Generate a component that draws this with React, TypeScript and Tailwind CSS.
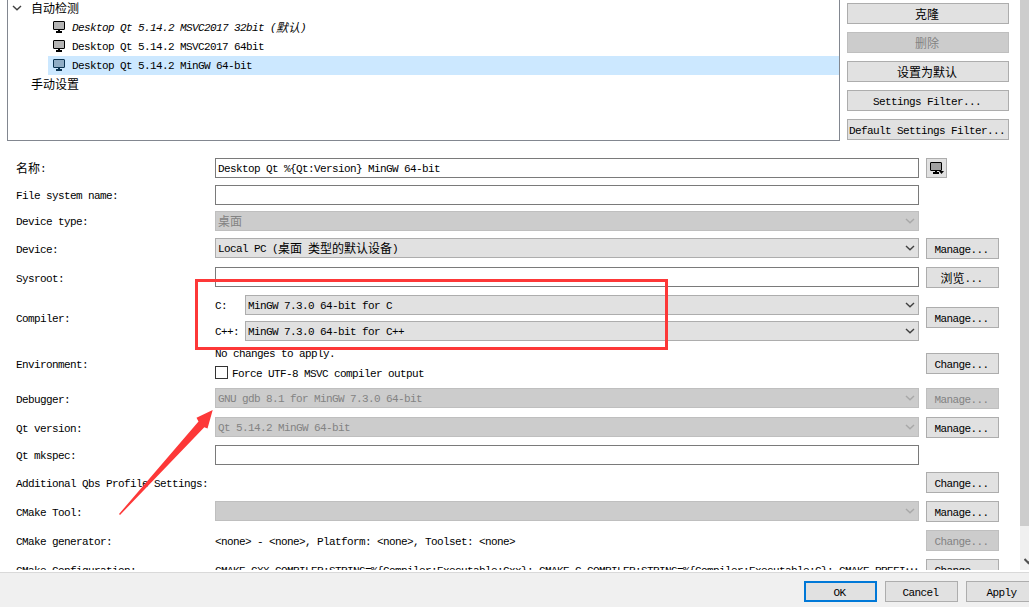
import type { ReactNode } from "react";

const latin = "font-['Liberation_Mono','Noto_Sans_CJK_SC',monospace] text-[11px] tracking-[-0.6px]";
const han = "font-['Noto_Sans_CJK_SC',sans-serif] text-[12px] leading-[0px] tracking-normal";

function T({ children, className = "" }: { children: string; className?: string }) {
  const parts = children.split(/([\u4e00-\u9fff]+|…)/).filter(Boolean);
  return (
    <span className={`block h-[14px] shrink-0 whitespace-pre leading-[16px] ${latin} ${className}`}>
      {parts.map((p, i) =>
        p === "…" ? (
          <span key={i} className={`relative -top-[4px] ${han}`}>{p}</span>
        ) : /[\u4e00-\u9fff]/.test(p) ? (
          <span key={i} className={`relative top-px ${han}`}>{p}</span>
        ) : (
          p
        )
      )}
    </span>
  );
}

function Monitor({ fill = "#b4b4b4", stroke = "#000" }: { fill?: string; stroke?: string }) {
  return (
    <svg width="12" height="12" viewBox="0 0 12 12" className="shrink-0">
      <rect x="0.5" y="0.5" width="11" height="8" rx="0.5" fill={fill} stroke={stroke} />
      <rect x="5" y="9" width="2" height="2" fill={stroke} />
      <rect x="3" y="10" width="6" height="2" fill={stroke} />
    </svg>
  );
}

function Chevron({ color = "#404040" }: { color?: string }) {
  return (
    <svg width="10" height="6" viewBox="0 0 10 6" className="shrink-0">
      <path d="M1 1 L5 4.8 L9 1" fill="none" stroke={color} strokeWidth="1.4" />
    </svg>
  );
}

function Button({ children, disabled, primary, className = "w-[73px]" }: { children: string; disabled?: boolean; primary?: boolean; className?: string }) {
  const look = disabled
    ? "border border-[#bfbfbf] bg-[#cccccc] text-[#838383]"
    : primary
      ? "border-2 border-[#0078d7] bg-[#e1e1e1]"
      : "border border-[#adadad] bg-[#e1e1e1]";
  return (
    <button disabled={disabled} className={`flex h-[21px] shrink-0 items-center justify-center overflow-hidden pr-[2px] ${look} ${className}`}>
      <T>{children}</T>
    </button>
  );
}

function Combo({ children = "", disabled }: { children?: string; disabled?: boolean }) {
  return (
    <div className={`flex h-5 min-w-0 grow items-center justify-between border pr-[3px] pl-[2px] ${disabled ? "border-[#bfbfbf] bg-[#cccccc] text-[#838383]" : "border-[#adadad] bg-[#e1e1e1]"}`}>
      <T>{children}</T>
      <Chevron color={disabled ? "#a8a8a8" : "#404040"} />
    </div>
  );
}

function Input({ children = "" }: { children?: string }) {
  return (
    <div className="flex h-5 grow items-center border border-[#7a7a7a] bg-white pl-[2px]">
      <T>{children}</T>
    </div>
  );
}

function Row({ label, className, action, children }: { label: string; className: string; action?: ReactNode; children?: ReactNode }) {
  return (
    <div className={`flex shrink-0 ${className}`}>
      <div className="flex w-[199px] shrink-0 items-center"><T>{label}</T></div>
      <div className="flex w-[704px] shrink-0 items-start">{children}</div>
      <div className="ml-[7px] flex items-center">{action}</div>
    </div>
  );
}

function KitItem({ children, selected, italic }: { children: string; selected?: boolean; italic?: boolean }) {
  return (
    <div className={`ml-10 flex h-[19px] items-center gap-[7px] pb-px pl-[5px] ${selected ? "bg-[#cce8ff]" : ""}`}>
      <Monitor fill={selected ? "#90adc5" : "#b4b4b4"} stroke={selected ? "#0b3350" : "#000"} />
      <T className={italic ? "italic" : ""}>{children}</T>
    </div>
  );
}

export default function App() {
  return (
    <div className="relative flex h-[607px] w-[1029px] flex-col overflow-hidden bg-white text-black">
      <div className="flex h-[570px] shrink-0 overflow-hidden">
        <div className="flex w-[1020px] shrink-0 flex-col">
          <div className="flex h-[141px] shrink-0">
            <div className="ml-[7px] w-[833px] border-x border-b border-[#828790]">
              <div className="flex h-[18px] items-center gap-[9px] pb-[2px] pl-[4px]">
                <Chevron />
                <T>自动检测</T>
              </div>
              <KitItem italic>Desktop Qt 5.14.2 MSVC2017 32bit (默认)</KitItem>
              <KitItem>Desktop Qt 5.14.2 MSVC2017 64bit</KitItem>
              <KitItem selected>Desktop Qt 5.14.2 MinGW 64-bit</KitItem>
              <div className="flex h-[19px] items-center pb-px pl-[23px]"><T>手动设置</T></div>
            </div>
            <div className="ml-[7px] flex flex-col gap-2 pt-[3px]">
              <Button className="w-[162px]">克隆</Button>
              <Button className="w-[162px]" disabled>删除</Button>
              <Button className="w-[162px]">设置为默认</Button>
              <Button className="w-[162px]">Settings Filter...</Button>
              <Button className="w-[162px]">Default Settings Filter...</Button>
            </div>
          </div>

          <div className="flex flex-col pt-[17px] pl-4">
            <Row
              label="名称:"
              className="mb-[7px] h-5"
              action={
                <button className="flex h-5 w-[21px] items-end border border-[#adadad] bg-[#e1e1e1] pb-[3px] pl-[3px]">
                  <Monitor fill="#a0a0a0" />
                  <svg width="5" height="3" viewBox="0 0 5 3" className="-ml-[3px] shrink-0"><path d="M0 0h5L2.5 3z" /></svg>
                </button>
              }
            >
              <Input>{"Desktop Qt %{Qt:Version} MinGW 64-bit"}</Input>
            </Row>
            <Row label="File system name:" className="mb-[6px] h-5"><Input /></Row>
            <Row label="Device type:" className="mb-[7px] h-5"><Combo disabled>桌面</Combo></Row>
            <Row label="Device:" className="mb-2 h-[21px]" action={<Button>Manage...</Button>}>
              <Combo>Local PC (桌面 类型的默认设备)</Combo>
            </Row>
            <Row label="Sysroot:" className="mb-[7px] h-[21px]" action={<Button>浏览...</Button>}><Input /></Row>
            <Row label="Compiler:" className="mb-[5px] h-[46px]" action={<div className="pb-px"><Button>Manage...</Button></div>}>
              <div className="flex grow flex-col gap-[6px]">
                <div className="flex items-center"><div className="w-[30px]"><T>C:</T></div><Combo>MinGW 7.3.0 64-bit for C</Combo></div>
                <div className="flex items-center"><div className="w-[30px]"><T>C++:</T></div><Combo>MinGW 7.3.0 64-bit for C++</Combo></div>
              </div>
            </Row>
            <Row label="Environment:" className="mb-[7px] h-[35px]" action={<Button>Change...</Button>}>
              <div className="flex flex-col">
                <T className="mb-[6px]">No changes to apply.</T>
                <div className="flex h-[13px] items-center gap-1">
                  <span className="size-[13px] border border-[#333] bg-white" />
                  <T>Force UTF-8 MSVC compiler output</T>
                </div>
              </div>
            </Row>
            <Row label="Debugger:" className="mb-2 h-[21px]" action={<Button disabled>Manage...</Button>}>
              <Combo disabled>GNU gdb 8.1 for MinGW 7.3.0 64-bit</Combo>
            </Row>
            <Row label="Qt version:" className="mb-[7px] h-[21px]" action={<Button>Manage...</Button>}>
              <Combo disabled>Qt 5.14.2 MinGW 64-bit</Combo>
            </Row>
            <Row label="Qt mkspec:" className="mb-[7px] h-5"><Input /></Row>
            <Row label="Additional Qbs Profile Settings:" className="mb-2 h-[21px]" action={<Button>Change...</Button>} />
            <Row label="CMake Tool:" className="mb-2 h-[21px]" action={<Button>Manage...</Button>}><Combo disabled /></Row>
            <Row label="CMake generator:" className="mb-2 h-[21px]" action={<Button disabled>Change...</Button>}>
              <T className="self-center">{"<none> - <none>, Platform: <none>, Toolset: <none>"}</T>
            </Row>
            <Row label="CMake Configuration:" className="h-[21px]" action={<Button>Change...</Button>}>
              <T className="self-center">{"CMAKE_CXX_COMPILER:STRING=%{Compiler:Executable:Cxx}; CMAKE_C_COMPILER:STRING=%{Compiler:Executable:C}; CMAKE_PREFI…"}</T>
            </Row>
          </div>
        </div>

        <div className="flex w-[17px] shrink-0 flex-col bg-[#f0f0f0]">
          <div className="h-[526px] bg-[#cdcdcd]" />
          <svg width="9" height="7" viewBox="0 0 9 7" className="mt-8 ml-1">
            <path d="M0.5 1 L4.5 5 L8.5 1" fill="none" stroke="#505050" strokeWidth="2" />
          </svg>
        </div>
      </div>

      <div className="mt-[2px] flex h-[35px] shrink-0 gap-2 border-t border-[#d9d9d9] bg-[#f0f0f0] pt-2 pl-[804px]">
        <Button primary>OK</Button>
        <Button>Cancel</Button>
        <Button>Apply</Button>
      </div>

      <div className="absolute top-[279px] left-[195px] h-[71px] w-[473px] border-3 border-[#fd3838]" />
      <svg width="96" height="108" viewBox="0 0 96 108" className="absolute top-[408px] left-[118px]">
        <path d="M94.7 2 L78.5 9.7 L80.5 13.5 L1 106 L2 107 L86.3 19.2 L89.5 20.5 Z" fill="#fd3838" />
      </svg>
    </div>
  );
}
